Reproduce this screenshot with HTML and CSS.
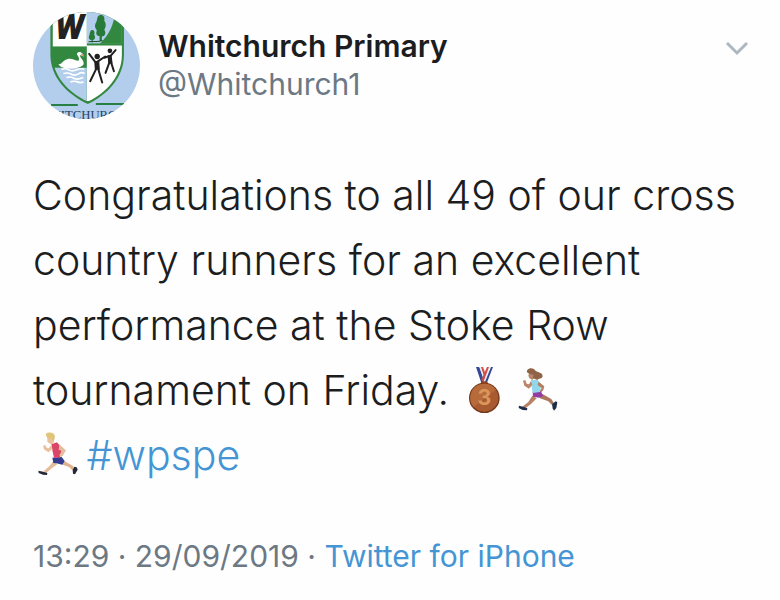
FILE: index.html
```
<!DOCTYPE html>
<html lang="en">
<head>
    <meta charset="UTF-8">
    <meta name="viewport" content="width=device-width, initial-scale=1.0">
    <title>Whitchurch Primary</title>
    <link rel="stylesheet" href="styles.css">
</head>
<body>
    <article class="tweet">
        <!-- Author -->
        <header class="tweet-header">
            <svg class="avatar" viewBox="22 23 320 320" role="img" aria-label="Whitchurch Primary crest">
                <defs>
                    <clipPath id="round"><circle cx="182" cy="183" r="160"/></clipPath>
                    <clipPath id="shield"><path d="M80 0H288V150C288 215 240 265 186 291C130 265 80 215 80 150Z"/></clipPath>
                </defs>
                <g clip-path="url(#round)">
                    <rect x="22" y="23" width="320" height="320" fill="#b3cdec"/>
                    <path d="M74 0H294V150C294 220 244 270 186 298C126 270 74 220 74 150Z" fill="#33883f"/>
                    <g clip-path="url(#shield)">
                        <rect x="80" y="0" width="103" height="126" fill="#fff"/>
                        <rect x="183" y="0" width="106" height="117" fill="#b3cdec"/>
                        <path d="M268 20C264 60 252 88 222 118H300V20Z" fill="#33883f"/>
                        <path d="M183 123H294V290H183Z" fill="#fff"/>
                        <path d="M85 190H183V300C145 285 105 245 85 190Z" fill="#b3cdec"/>
                    </g>
                    <text x="88" y="104" class="crest-initial">W</text>
                    <path d="M224 31C212 33 215 47 211 54C204 65 209 73 213 78C208 89 214 95 221 95V110H228V96C239 95 241 84 235 76C242 66 240 55 235 49C238 37 231 31 224 31ZM199 77C191 78 193 88 190 94C187 101 191 107 197 107V114H201V107C209 105 209 97 205 91C208 83 204 77 199 77Z" fill="#287a39"/>
                    <path d="M188 112C200 108 214 116 230 108" fill="none" stroke="#214f2a" stroke-width="3"/>
                    <!-- Swan -->
                    <path d="M98 179C108 180 111 167 124 164C137 159 148 169 157 169C166 161 151 152 154 146C159 139 173 145 174 156C166 154 163 151 162 153C164 162 177 169 173 180C165 193 127 195 111 189C105 187 101 183 98 179Z" fill="#fff"/>
                    <path d="M166 146L177 155L167 153Z" fill="#c7773e"/>
                    <path d="M107 195Q119 190 129 196T153 196T175 195M113 207Q126 203 137 209T158 208T176 207M122 219Q134 215 144 221T172 219M134 232Q146 228 155 232T173 232" fill="none" stroke="#fff" stroke-width="5"/>
                    <!-- Children -->
                    <g fill="#202020">
                        <circle cx="214" cy="156" r="8"/>
                        <circle cx="252" cy="139" r="7"/>
                        <path d="M205 170L220 168L222 196L207 195ZM245 153L257 151L260 177L247 178Z"/>
                    </g>
                    <path d="M190 148L208 172M217 170L238 156M211 193L193 230M217 193L229 234M236 160L249 155M254 154L269 137M250 175L239 205M256 175L264 200" fill="none" stroke="#202020" stroke-width="6" stroke-linecap="round"/>
                    <path d="M76 301H156M210 298H294" stroke="#287f43" stroke-width="6"/>
                    <text x="42" y="342" class="crest-name">WHITCHURCH</text>
                </g>
            </svg>
            <div class="author">
                <h1 class="author-name">Whitchurch Primary</h1>
                <p class="author-handle">@Whitchurch1</p>
            </div>
            <button class="menu-button" type="button" aria-label="More options">
                <svg class="chevron" viewBox="0 0 24 16"><path d="M2 3L12 13L22 3"/></svg>
            </button>
        </header>

        <!-- Message -->
        <p class="message">
            Congratulations to all 49 of our cross country runners for an excellent performance at the Stoke Row tournament on Friday.
            <svg class="emoji" viewBox="0 22 144 144" role="img" aria-label="Third place medal">
                <path d="M45 28H55L72 70L62 79Z" fill="#34499a"/>
                <path d="M55 28H61L75 65L70 73Z" fill="#eee"/>
                <path d="M60 28H66L78 60L73 67Z" fill="#d24c48"/>
                <path d="M96 28H86L65 70L76 80Z" fill="#34499a"/>
                <path d="M90 28H84L65 69L71 75Z" fill="#f2f2f5"/>
                <path d="M84 28H78L61 67L67 74Z" fill="#d24c48"/>
                <ellipse cx="70" cy="77" rx="11" ry="6" fill="#8c471f"/>
                <circle cx="70" cy="121" r="46" fill="#78391a"/>
                <circle cx="70" cy="120" r="42" fill="#a85b30"/>
                <path d="M30 108A42 42 0 0 1 104 96L38 148A42 42 0 0 1 30 108Z" fill="#b76b3b"/>
                <text x="70" y="143" class="medal-number">3</text>
            </svg>
            <svg class="emoji" viewBox="156 28 144 144" role="img" aria-label="Woman running">
                <path d="M211 120L224 128L207 145L188 159L181 153L199 139Z" fill="#b98267"/>
                <path d="M233 111L248 119L268 130L276 143L269 147L259 137L234 128Z" fill="#ad775e"/>
                <path d="M171 150L183 153L196 158L195 164L182 163L170 157Z" fill="#202d4a"/>
                <path d="M281 137L286 140L283 157L276 165L272 158L270 146Z" fill="#202d4a"/>
                <path d="M212 108L236 106L244 121L232 126L213 123Z" fill="#913da1"/>
                <path d="M207 73L226 72L238 86L234 109L212 112L209 93Z" fill="#91d7e9"/>
                <path d="M207 76L211 87L201 99L187 90L183 75L190 73L194 84L201 86Z" fill="#bb866b"/>
                <path d="M230 78L247 92L244 103L238 110L234 105L239 97L227 88Z" fill="#b57e63"/>
                <path d="M202 49L216 45L219 65L211 73L202 68L199 60Z" fill="#ba866b"/>
                <path d="M196 43C202 35 216 36 221 46C231 50 242 52 242 62C241 70 229 68 226 73L212 67L215 57L203 55L194 49Z" fill="#8f6348"/>
            </svg>
            <br>
            <svg class="emoji" viewBox="18 16 144 144" role="img" aria-label="Man running">
                <path d="M79 109L91 119L75 130L57 146L50 139L67 125Z" fill="#e3bc9a"/>
                <path d="M101 105L116 111L138 124L143 135L136 137L126 127L103 119Z" fill="#dfb28e"/>
                <path d="M34 138L49 141L61 145L60 151L48 150L35 145Z" fill="#242938"/>
                <path d="M142 126L149 128L152 135L144 149L138 147L137 136Z" fill="#242938"/>
                <path d="M76 99L104 97L113 109L106 120L88 116L79 115Z" fill="#323d91"/>
                <path d="M73 59L90 53L100 65L105 75L98 99L81 99L77 81Z" fill="#da4668"/>
                <path d="M73 61L76 72L65 83L52 75L48 64L54 60L59 69L65 71Z" fill="#e8c29e"/>
                <path d="M97 59L112 73L117 77L107 93L101 98L97 91L105 79L95 75Z" fill="#e5bd9b"/>
                <path d="M61 35L76 30L82 45L79 57L70 58L61 51Z" fill="#e9c19d"/>
                <path d="M57 33C55 26 64 22 72 24C83 24 86 36 82 44L77 49L73 39L62 40Z" fill="#dfc578"/>
            </svg>
            <a class="link" href="#wpspe">#wpspe</a>
        </p>

        <!-- Date and source -->
        <footer class="meta">
            <time datetime="2019-09-29T13:29">13:29 · 29/09/2019</time> · <a class="link" href="#source">Twitter for iPhone</a>
        </footer>
    </article>
</body>
</html>
```
FILE: styles.css
```
body {
    font-family: Inter, "Liberation Sans", sans-serif;
    margin: 0;
    background-color: #fefefe;
    color: #1b1d20;
}
.tweet {
    padding: 12px 31px 24px 33px;
}
/* Author */
.tweet-header {
    display: flex;
    align-items: flex-start;
}
.avatar {
    width: 107px;
    height: 107px;
    flex-shrink: 0;
}
.crest-initial {
    font-family: Roboto, "Liberation Sans", sans-serif;
    font-size: 104px;
    font-weight: 900;
    font-style: italic;
    fill: #222;
}
.crest-name {
    font-family: "Liberation Serif", serif;
    font-size: 38px;
    fill: #24415b;
}
.author {
    flex: 1;
    padding: 15px 0 0 18px;
}
.author-name,
.author-handle {
    margin: 0;
    font-size: 30px;
    line-height: 38px;
}
.author-name {
    font-weight: 600;
}
.author-handle {
    font-weight: 400;
    color: #6c7883;
}
.menu-button {
    margin-top: 24px;
    padding: 4px 0;
    border: none;
    background: none;
    cursor: pointer;
}
.chevron {
    display: block;
    width: 24px;
    height: 16px;
    fill: none;
    stroke: #adb7c0;
    stroke-width: 3;
}
/* Message */
.message {
    margin: 44px 0 0;
    font-size: 41px;
    font-weight: 300;
    line-height: 65px;
}
.emoji {
    width: 48px;
    height: 48px;
    margin-right: -6px;
    vertical-align: -8px;
}
.medal-number {
    font-size: 64px;
    font-weight: bold;
    text-anchor: middle;
    fill: #dc9659;
}
.link {
    color: #4595d5;
    text-decoration: none;
}
/* Date and source */
.meta {
    margin-top: 48px;
    font-size: 30px;
    line-height: 40px;
    color: #6c7883;
}
```
